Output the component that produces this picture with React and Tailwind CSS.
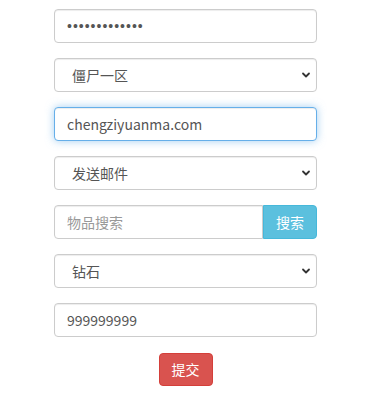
import { useState } from 'react';

const font = { fontFamily: '"Noto Sans CJK SC", "Noto Sans", sans-serif' };

function Chevron() {
  return (
    <svg
      className="pointer-events-none absolute right-[6px] top-1/2 -translate-y-1/2"
      width="10"
      height="10"
      viewBox="0 0 10 10"
    >
      <path d="M2 3.5 L5 6.5 L8 3.5" fill="none" stroke="#333" strokeWidth="1.8" strokeLinecap="round" strokeLinejoin="round" />
    </svg>
  );
}

function Select({ value, options }) {
  const [v, setV] = useState(value);
  return (
    <div className="relative">
      <select
        value={v}
        onChange={e => setV(e.target.value)}
        className="h-[34px] w-full appearance-none rounded-[4px] border border-[#ccc] bg-white pl-[17px] pr-6 text-[14px] text-[#555] shadow-[inset_0_1px_1px_rgba(0,0,0,0.075)] outline-none"
      >
        {options.map(o => (
          <option key={o} value={o}>{o}</option>
        ))}
      </select>
      <Chevron />
    </div>
  );
}

export default function App() {
  const inputCls =
    'h-[34px] w-full rounded-[4px] border border-[#ccc] bg-white px-3 text-[14px] text-[#555] placeholder:text-[#999] shadow-[inset_0_1px_1px_rgba(0,0,0,0.075)] outline-none';

  return (
    <div className="min-h-[419px] w-[391px] bg-white pt-[9px]" style={font}>
      <form className="ml-[54px] flex w-[263px] flex-col gap-[15px]" onSubmit={e => e.preventDefault()}>
        <input
          type="password"
          defaultValue="1234567890123"
          className={inputCls + ' font-["Liberation_Sans",sans-serif] tracking-[1px]'}
        />
        <Select value="僵尸一区" options={['僵尸一区', '僵尸二区']} />
        <input
          type="text"
          defaultValue="chengziyuanma.com"
          className="h-[34px] w-full rounded-[4px] border border-[#66afe9] bg-white px-3 text-[14px] text-[#555] shadow-[inset_0_1px_1px_rgba(0,0,0,0.075),0_0_8px_rgba(102,175,233,0.6)] outline-none"
        />
        <Select value="发送邮件" options={['发送邮件', '发送物品']} />
        <div className="flex">
          <input
            type="text"
            placeholder="物品搜索"
            className="h-[34px] min-w-0 flex-1 rounded-l-[4px] border border-[#ccc] bg-white px-3 text-[14px] text-[#555] placeholder:text-[#999] shadow-[inset_0_1px_1px_rgba(0,0,0,0.075)] outline-none"
          />
          <button
            type="button"
            className="h-[34px] w-[54px] rounded-r-[4px] border border-[#46b8da] bg-[#5bc0de] text-[14px] text-white"
          >
            搜索
          </button>
        </div>
        <Select value="钻石" options={['钻石', '金币']} />
        <input type="text" defaultValue="999999999" className={inputCls} />
        <div className="flex justify-center pt-px">
          <button
            type="submit"
            className="h-[33px] w-[54px] rounded-[4px] border border-[#d43f3a] bg-[#d9534f] text-[14px] text-white"
          >
            提交
          </button>
        </div>
      </form>
    </div>
  );
}
